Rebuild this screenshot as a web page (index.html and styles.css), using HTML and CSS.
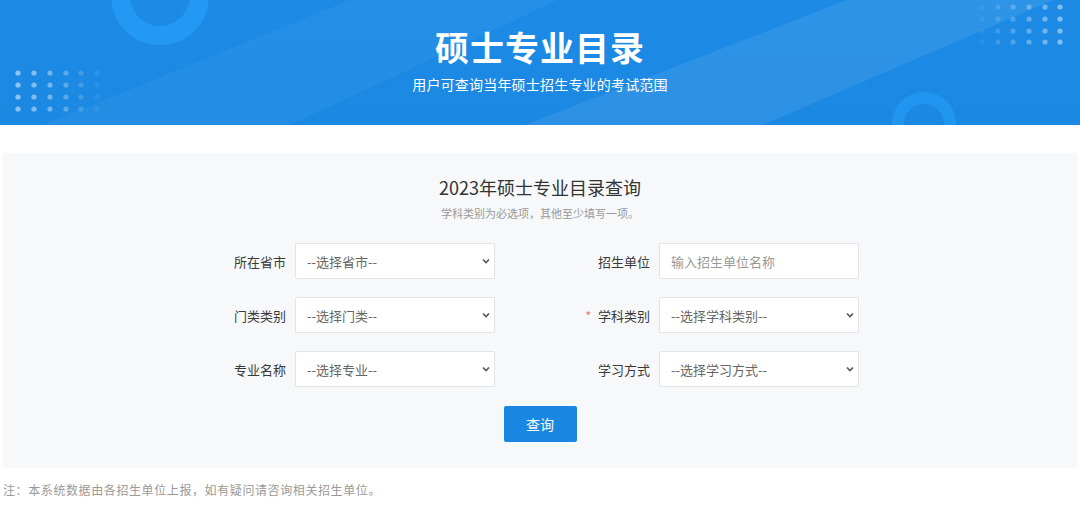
FILE: index.html
```html
<!DOCTYPE html>
<html lang="zh-CN">
<head>
    <meta charset="UTF-8">
    <meta name="viewport" content="width=device-width, initial-scale=1.0">
    <title>硕士专业目录</title>
    <link rel="stylesheet" href="styles.css">
</head>
<body>
    <header class="banner">
        <svg class="banner-deco" width="1080" height="125" viewBox="0 0 1080 125">
            <polygon points="43,125 350,0 558,0 290,125" fill="#ffffff" fill-opacity="0.04"/>
            <polygon points="525,125 847,0 1053,0 763,125" fill="#ffffff" fill-opacity="0.08"/>
            <circle cx="160" cy="-4" r="39.5" fill="none" stroke="#2399f3" stroke-width="19"/>
            <circle cx="924" cy="124" r="26" fill="none" stroke="#2196f0" stroke-width="12"/>
            <g fill="#ffffff" id="dots-left">
                <g fill-opacity="0.5"><circle cx="18" cy="73" r="2.6"/><circle cx="18" cy="85" r="2.6"/><circle cx="18" cy="97" r="2.6"/><circle cx="18" cy="109" r="2.6"/></g>
                <g fill-opacity="0.45"><circle cx="34" cy="73" r="2.6"/><circle cx="34" cy="85" r="2.6"/><circle cx="34" cy="97" r="2.6"/><circle cx="34" cy="109" r="2.6"/></g>
                <g fill-opacity="0.38"><circle cx="50" cy="73" r="2.6"/><circle cx="50" cy="85" r="2.6"/><circle cx="50" cy="97" r="2.6"/><circle cx="50" cy="109" r="2.6"/></g>
                <g fill-opacity="0.28"><circle cx="66" cy="73" r="2.6"/><circle cx="66" cy="85" r="2.6"/><circle cx="66" cy="97" r="2.6"/><circle cx="66" cy="109" r="2.6"/></g>
                <g fill-opacity="0.17"><circle cx="81" cy="73" r="2.6"/><circle cx="81" cy="85" r="2.6"/><circle cx="81" cy="97" r="2.6"/><circle cx="81" cy="109" r="2.6"/></g>
                <g fill-opacity="0.08"><circle cx="97" cy="73" r="2.6"/><circle cx="97" cy="85" r="2.6"/><circle cx="97" cy="97" r="2.6"/><circle cx="97" cy="109" r="2.6"/></g>
            </g>
            <g fill="#ffffff" id="dots-right">
                <g fill-opacity="0.06"><circle cx="982" cy="7" r="2.6"/><circle cx="982" cy="19" r="2.6"/><circle cx="982" cy="31" r="2.6"/><circle cx="982" cy="42" r="2.6"/></g>
                <g fill-opacity="0.14"><circle cx="998" cy="7" r="2.6"/><circle cx="998" cy="19" r="2.6"/><circle cx="998" cy="31" r="2.6"/><circle cx="998" cy="42" r="2.6"/></g>
                <g fill-opacity="0.22"><circle cx="1013" cy="7" r="2.6"/><circle cx="1013" cy="19" r="2.6"/><circle cx="1013" cy="31" r="2.6"/><circle cx="1013" cy="42" r="2.6"/></g>
                <g fill-opacity="0.3"><circle cx="1029" cy="7" r="2.6"/><circle cx="1029" cy="19" r="2.6"/><circle cx="1029" cy="31" r="2.6"/><circle cx="1029" cy="42" r="2.6"/></g>
                <g fill-opacity="0.38"><circle cx="1045" cy="7" r="2.6"/><circle cx="1045" cy="19" r="2.6"/><circle cx="1045" cy="31" r="2.6"/><circle cx="1045" cy="42" r="2.6"/></g>
                <g fill-opacity="0.45"><circle cx="1060" cy="7" r="2.6"/><circle cx="1060" cy="19" r="2.6"/><circle cx="1060" cy="31" r="2.6"/><circle cx="1060" cy="42" r="2.6"/></g>
            </g>
        </svg>
        <h1 class="banner-title">硕士专业目录</h1>
        <p class="banner-sub">用户可查询当年硕士招生专业的考试范围</p>
    </header>

    <main class="search-panel">
        <h2 class="panel-title">2023年硕士专业目录查询</h2>
        <p class="panel-tip">学科类别为必选项，其他至少填写一项。</p>

        <form class="search-form">
            <div class="form-item">
                <label for="ssdm">所在省市</label>
                <div class="select-wrap">
                    <select id="ssdm" class="field">
                        <option>--选择省市--</option>
                    </select>
                    <svg class="select-arrow" width="8" height="6" viewBox="0 0 8 6"><path d="M1 1.5 L4 4.5 L7 1.5" fill="none" stroke="#555" stroke-width="1.6"/></svg>
                </div>
            </div>
            <div class="form-item">
                <label for="dwmc">招生单位</label>
                <input type="text" id="dwmc" class="field" placeholder="输入招生单位名称">
            </div>

            <div class="form-item">
                <label for="mldm">门类类别</label>
                <div class="select-wrap">
                    <select id="mldm" class="field">
                        <option>--选择门类--</option>
                    </select>
                    <svg class="select-arrow" width="8" height="6" viewBox="0 0 8 6"><path d="M1 1.5 L4 4.5 L7 1.5" fill="none" stroke="#555" stroke-width="1.6"/></svg>
                </div>
            </div>
            <div class="form-item">
                <label for="yjxkdm"><span class="required">*</span>学科类别</label>
                <div class="select-wrap">
                    <select id="yjxkdm" class="field">
                        <option>--选择学科类别--</option>
                    </select>
                    <svg class="select-arrow" width="8" height="6" viewBox="0 0 8 6"><path d="M1 1.5 L4 4.5 L7 1.5" fill="none" stroke="#555" stroke-width="1.6"/></svg>
                </div>
            </div>

            <div class="form-item">
                <label for="zymc">专业名称</label>
                <div class="select-wrap">
                    <select id="zymc" class="field">
                        <option>--选择专业--</option>
                    </select>
                    <svg class="select-arrow" width="8" height="6" viewBox="0 0 8 6"><path d="M1 1.5 L4 4.5 L7 1.5" fill="none" stroke="#555" stroke-width="1.6"/></svg>
                </div>
            </div>
            <div class="form-item">
                <label for="xxfs">学习方式</label>
                <div class="select-wrap">
                    <select id="xxfs" class="field">
                        <option>--选择学习方式--</option>
                    </select>
                    <svg class="select-arrow" width="8" height="6" viewBox="0 0 8 6"><path d="M1 1.5 L4 4.5 L7 1.5" fill="none" stroke="#555" stroke-width="1.6"/></svg>
                </div>
            </div>
        </form>

        <div class="form-actions">
            <button type="button" class="btn-search">查询</button>
        </div>
    </main>

    <p class="note">注：本系统数据由各招生单位上报，如有疑问请咨询相关招生单位。</p>
</body>
</html>
```

FILE: styles.css
```css
*{
    box-sizing: border-box;
}
body{
    margin: 0;
    font-family: "Noto Sans CJK SC", "Noto Sans", sans-serif;
    color: #333;
    background: #fff;
}
.banner{
    position: relative;
    height: 125px;
    padding-top: 27px;
    overflow: hidden;
    text-align: center;
    color: #fff;
    background: linear-gradient(180deg, #1d8be6 0%, #1b88e2 100%);
}
.banner-deco{
    position: absolute;
    left: 0;
    top: 0;
}
.banner-title{
    position: relative;
    margin: 0;
    font-size: 34px;
    line-height: 40px;
    font-weight: 700;
    letter-spacing: 1px;
}
.banner-sub{
    position: relative;
    margin: 7px 0 0;
    font-size: 14px;
    line-height: 20px;
    letter-spacing: 0.2px;
}
.search-panel{
    margin: 28px 3px 0;
    padding: 22px 0 26px;
    background-color: #f6f8f9;
}
.panel-title{
    margin: 0;
    text-align: center;
    font-size: 18px;
    line-height: 24px;
    font-weight: 400;
    color: #333;
}
.panel-tip{
    margin: 6px 0 0;
    text-align: center;
    font-size: 11px;
    line-height: 16px;
    color: #999;
}
.search-form{
    display: grid;
    grid-template-columns: 289px 289px;
    column-gap: 75px;
    row-gap: 18px;
    margin: 22px 0 0 203px;
}
.form-item{
    display: flex;
    align-items: center;
}
.form-item label{
    width: 80px;
    margin-right: 9px;
    text-align: right;
    font-size: 13px;
    color: #3a3a3a;
}
.required{
    color: #f56c6c;
    margin-right: 7px;
    font-size: 12px;
}
.select-wrap{
    position: relative;
    width: 200px;
    height: 36px;
}
.select-arrow{
    position: absolute;
    right: 5px;
    top: 15px;
    pointer-events: none;
}
.field{
    width: 200px;
    height: 36px;
    padding: 0 20px 0 11px;
    border: 1px solid #e1e4e8;
    border-radius: 2px;
    background-color: #fff;
    font-family: inherit;
    font-size: 13px;
    color: #666;
    outline: none;
    appearance: none;
    -webkit-appearance: none;
}
input.field{
    padding-left: 11px;
}
input.field::placeholder{
    color: #999;
}
.form-actions{
    display: flex;
    justify-content: center;
    margin-top: 19px;
}
.btn-search{
    width: 73px;
    height: 36px;
    border: none;
    border-radius: 2px;
    background-color: #1a88e2;
    color: #fff;
    font-family: inherit;
    font-size: 14px;
    cursor: pointer;
}
.note{
    margin: 13px 0 0 3px;
    font-size: 12px;
    line-height: 18px;
    letter-spacing: 0.6px;
    color: #999;
}
```
